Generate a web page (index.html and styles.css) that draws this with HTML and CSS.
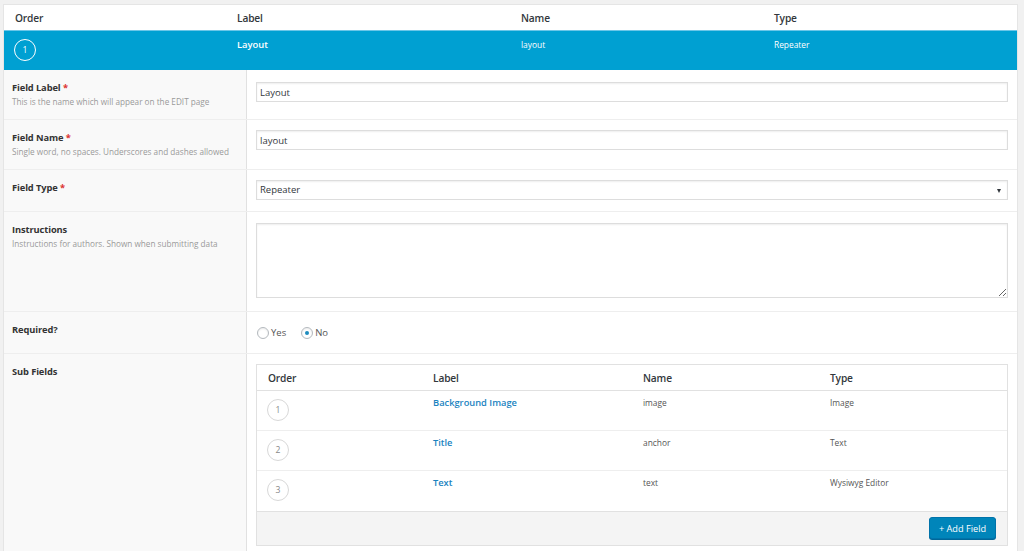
FILE: index.html
```html
<!DOCTYPE html>
<html lang="en">
<head>
<meta charset="utf-8">
<title>Field settings</title>
<link rel="stylesheet" href="styles.css">
</head>
<body>
<div class="box">
  <div class="cols head">
    <div class="c">Order</div>
    <div class="c">Label</div>
    <div class="c">Name</div>
    <div class="c">Type</div>
  </div>
  <div class="cols open-row">
    <div class="c order"><span class="num num-light">1</span></div>
    <div class="c lbl">Layout</div>
    <div class="c small">layout</div>
    <div class="c small">Repeater</div>
  </div>

  <div class="settings">
    <div class="srow">
      <div class="slabel">
        <div class="name">Field Label <span class="req">*</span></div>
        <div class="desc">This is the name which will appear on the EDIT page</div>
      </div>
      <div class="sinput"><input class="txt" type="text" value="Layout"></div>
    </div>
    <div class="srow">
      <div class="slabel">
        <div class="name">Field Name <span class="req">*</span></div>
        <div class="desc">Single word, no spaces. Underscores and dashes allowed</div>
      </div>
      <div class="sinput"><input class="txt" type="text" value="layout"></div>
    </div>
    <div class="srow">
      <div class="slabel">
        <div class="name">Field Type <span class="req">*</span></div>
      </div>
      <div class="sinput"><div class="sel">Repeater</div></div>
    </div>
    <div class="srow">
      <div class="slabel">
        <div class="name">Instructions</div>
        <div class="desc">Instructions for authors. Shown when submitting data</div>
      </div>
      <div class="sinput"><textarea class="area"></textarea></div>
    </div>
    <div class="srow">
      <div class="slabel">
        <div class="name">Required?</div>
      </div>
      <div class="sinput radios">
        <span class="radio"><span class="dot"></span>Yes</span>
        <span class="radio"><span class="dot on"></span>No</span>
      </div>
    </div>
    <div class="srow last">
      <div class="slabel">
        <div class="name">Sub Fields</div>
      </div>
      <div class="sinput">
        <div class="sub">
          <div class="subcols subhead">
            <div class="c">Order</div>
            <div class="c">Label</div>
            <div class="c">Name</div>
            <div class="c">Type</div>
          </div>
          <div class="subcols subrow">
            <div class="c order"><span class="num">1</span></div>
            <div class="c link">Background Image</div>
            <div class="c small">image</div>
            <div class="c small">Image</div>
          </div>
          <div class="subcols subrow">
            <div class="c order"><span class="num">2</span></div>
            <div class="c link">Title</div>
            <div class="c small">anchor</div>
            <div class="c small">Text</div>
          </div>
          <div class="subcols subrow">
            <div class="c order"><span class="num">3</span></div>
            <div class="c link">Text</div>
            <div class="c small">text</div>
            <div class="c small">Wysiwyg Editor</div>
          </div>
          <div class="subfoot">
            <span class="btn">+ Add Field</span>
          </div>
        </div>
      </div>
    </div>
  </div>
</div>
</body>
</html>
```

FILE: styles.css
```css
* { box-sizing: border-box; }
html, body { margin: 0; padding: 0; }
body {
  background: #f1f1f1;
  font-family: "Open Sans", "Noto Sans", sans-serif;
  color: #32373c;
  height: 551px;
  overflow: hidden;
}
.box {
  margin: 4px 6px 0 3px;
  background: #fff;
  border: 1px solid #e5e5e5;
  border-bottom: 0;
}
.cols {
  display: grid;
  grid-template-columns: 222px 284px 253px 1fr;
}
.head {
  height: 25px;
  align-items: center;
}
.head .c, .subhead .c {
  padding-left: 11px;
  font-size: 10.2px;
  font-weight: 600;
  letter-spacing: -0.15px;
  color: #32373c;
  line-height: 14px;
}
.open-row {
  height: 40px;
  background: #00a0d2;
  border-top: 1px solid #6cc6e8;
  color: #fff;
}
.open-row .c { padding: 7px 0 0 11px; line-height: 14px; }
.open-row .order { padding: 8px 0 0 10px; }
.open-row .lbl { font-size: 9.4px; font-weight: 600; }
.small { font-size: 8.4px; }
.num {
  display: flex;
  align-items: center;
  justify-content: center;
  width: 22px;
  height: 22px;
  border-radius: 50%;
  border: 1px solid #d8d8d8;
  font-size: 8.6px;
  color: #888;
}
.num-light { border-color: #fff; color: #fff; }

.settings { display: flex; flex-direction: column; }
.srow {
  display: flex;
  border-top: 1px solid #eeeeee;
}
.srow:first-child { border-top: 0; }
.slabel {
  width: 243px;
  flex: none;
  background: #f9f9f9;
  border-right: 1px solid #e1e1e1;
  padding: 11px 8px 11px 8px;
}
.slabel .name {
  font-size: 9.3px;
  font-weight: 700;
  line-height: 13px;
  color: #333;
  letter-spacing: -0.1px;
}
.req { color: #dc3232; }
.slabel .desc {
  font-size: 8.2px;
  line-height: 14px;
  color: #999;
  margin-top: 1px;
  margin-bottom: -1px;
}
.sinput {
  flex: 1;
  padding: 10px 9px 11px 9px;
}
.txt, .sel, .area {
  display: block;
  width: 752px;
  border: 1px solid #ddd;
  box-shadow: inset 0 1px 2px rgba(0,0,0,.07);
  background: #fff;
  font-family: "Open Sans", "Noto Sans", sans-serif;
  font-size: 9.5px;
  color: #32373c;
  margin: 0;
  outline: none;
}
.txt, .sel {
  height: 20px;
  padding: 0 3px;
  line-height: 18px;
}
.srow:first-child .sinput { padding-top: 12px; }
.sel { position: relative; }
.sel::after {
  content: "";
  position: absolute;
  right: 6px;
  top: 8px;
  border-left: 2.5px solid transparent;
  border-right: 2.5px solid transparent;
  border-top: 4px solid #32373c;
}
.area {
  height: 75px;
  margin: 1px 0 2px;
  resize: vertical;
  padding: 2px 3px;
}
.radios {
  display: flex;
  align-items: center;
  height: 41px;
}
.radio {
  display: inline-flex;
  align-items: center;
  font-size: 9.5px;
  color: #555;
  margin-right: 15px;
  height: 20px;
  padding-top: 1px;
}
.radio:first-child { margin-left: 1px; }
.dot {
  width: 12px;
  height: 12px;
  border-radius: 50%;
  border: 1px solid #b4b9be;
  background: #fff;
  margin-right: 2px;
  display: inline-flex;
  align-items: center;
  justify-content: center;
  box-shadow: inset 0 1px 2px rgba(0,0,0,.08);
}
.dot.on::before {
  content: "";
  width: 4px;
  height: 4px;
  border-radius: 50%;
  background: #1e8cbe;
}
.srow.last { min-height: 200px; }
.sub {
  width: 752px;
  border: 1px solid #e1e1e1;
}
.subcols {
  display: grid;
  grid-template-columns: 165px 210px 187px 1fr;
}
.subhead {
  height: 26px;
  align-items: center;
  border-bottom: 1px solid #e1e1e1;
}
.subrow {
  height: 40px;
  border-bottom: 1px solid #eeeeee;
}
.subrow:nth-last-child(2) { border-bottom: 0; }
.subrow .c { padding: 5px 0 0 11px; line-height: 14px; color: #555; }
.subrow .order { padding: 8px 0 0 10px; }
.subrow .link {
  color: #1a83bf;
  font-size: 9.3px;
  font-weight: 600;
}
.subfoot {
  height: 34px;
  background: #f4f4f4;
  border-top: 1px solid #e1e1e1;
  display: flex;
  justify-content: flex-end;
  align-items: flex-start;
  padding: 5px 11px 0 0;
}
.btn {
  display: inline-flex;
  align-items: center;
  justify-content: center;
  width: 67px;
  height: 22px;
  background: #0085ba;
  border: 1px solid #0073aa;
  border-radius: 3px;
  box-shadow: 0 1px 0 #006799;
  color: #fff;
  font-size: 9.2px;
}
```
